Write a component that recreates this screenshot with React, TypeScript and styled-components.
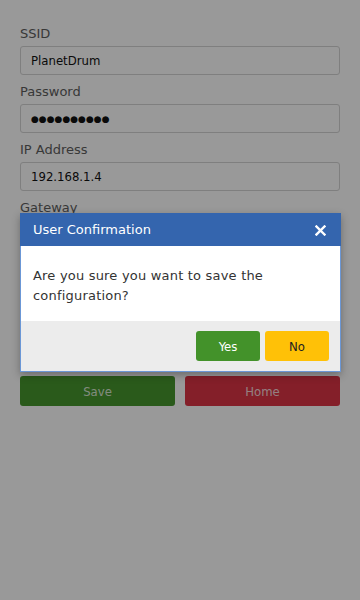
import React from "react";
import styled, { createGlobalStyle } from "styled-components";

const Global = createGlobalStyle`
  html, body { margin: 0; padding: 0; background: #fff; }
  body { font-family: "DejaVu Sans", Verdana, sans-serif; }
  * { box-sizing: border-box; }
`;

const Page = styled.div`
  position: relative;
  width: 360px;
  height: 600px;
  background: #fff;
  overflow: hidden;
`;

const Form = styled.form`
  display: flex;
  flex-direction: column;
  padding: 24px 20px 0 20px;
`;

const Field = styled.div`
  display: flex;
  flex-direction: column;
  gap: 2px;
  margin-bottom: 7px;
`;

const Label = styled.label`
  font-size: 13px;
  line-height: 20px;
  color: #5e5e5e;
`;

const Input = styled.input<{ $mask?: boolean }>`
  height: 29px;
  width: 100%;
  border: 1px solid #d4d4d4;
  border-radius: 3px;
  padding: 0 10px;
  font-family: ${(p) =>
    p.$mask ? `"DejaVu Sans", sans-serif` : `"DejaVu Sans Condensed", "DejaVu Sans", sans-serif`};
  font-size: ${(p) => (p.$mask ? "9px" : "13px")};
  color: #111;
  background: #fff;
  outline: none;
`;

const Actions = styled.div`
  display: grid;
  grid-template-columns: 1fr 1fr;
  gap: 10px;
  margin-top: 4px;
`;

const ActionButton = styled.button<{ $tone: "save" | "home" }>`
  height: 30px;
  border: none;
  border-radius: 3px;
  background: ${(p) => (p.$tone === "save" ? "#46962e" : "#dc3545")};
  color: rgba(255, 255, 255, 0.8);
  font-family: "DejaVu Sans Condensed", "DejaVu Sans", sans-serif;
  font-size: 13px;
`;

const Backdrop = styled.div`
  position: absolute;
  inset: 0;
  background: rgba(0, 0, 0, 0.4);
`;

const Dialog = styled.div`
  position: absolute;
  left: 20px;
  top: 213px;
  width: 321px;
  border: 1px solid #6b97d6;
  background: #fff;
  box-shadow: 0 3px 8px rgba(0, 0, 0, 0.3);
  display: flex;
  flex-direction: column;
`;

const Header = styled.div`
  height: 33px;
  background: #3465ae;
  display: flex;
  align-items: center;
  justify-content: space-between;
  padding: 1px 12px 0 12px;
  margin: -1px -1px 0 -1px;
`;

const Title = styled.div`
  color: #fff;
  font-size: 13px;
  line-height: 20px;
  padding-left: 1px;
`;

const Close = styled.button`
  width: 14px;
  height: 14px;
  padding: 0;
  border: none;
  background: none;
  display: flex;
  align-items: center;
  justify-content: center;
  margin-right: 2px;
`;

const Body = styled.div`
  padding: 20px 12px 15px 12px;
  font-size: 13px;
  line-height: 20px;
  color: #333;
  letter-spacing: 0.2px;
`;

const Footer = styled.div`
  background: #ececec;
  padding: 10px 11px;
  display: flex;
  justify-content: flex-end;
  gap: 5px;
`;

const DialogButton = styled.button<{ $tone: "yes" | "no" }>`
  width: 64px;
  height: 30px;
  border: none;
  border-radius: 3px;
  background: ${(p) => (p.$tone === "yes" ? "#43922a" : "#ffc107")};
  color: ${(p) => (p.$tone === "yes" ? "#fff" : "#222")};
  font-family: "DejaVu Sans Condensed", "DejaVu Sans", sans-serif;
  font-size: 13px;
`;

const fields: { label: string; value: string; mask?: boolean }[] = [
  { label: "SSID", value: "PlanetDrum" },
  { label: "Password", value: "●●●●●●●●●●", mask: true },
  { label: "IP Address", value: "192.168.1.4" },
  { label: "Gateway", value: "192.168.1.1" },
  { label: "Subnet Mask", value: "255.255.255.0" },
  { label: "DNS", value: "8.8.8.8" },
];

export default function App() {
  return (
    <Page>
      <Global />
      <Form onSubmit={(e) => e.preventDefault()}>
        {fields.map((f) => (
          <Field key={f.label}>
            <Label>{f.label}</Label>
            <Input type="text" $mask={f.mask} defaultValue={f.value} readOnly />
          </Field>
        ))}
        <Actions>
          <ActionButton type="button" $tone="save">Save</ActionButton>
          <ActionButton type="button" $tone="home">Home</ActionButton>
        </Actions>
      </Form>
      <Backdrop />
      <Dialog role="dialog">
        <Header>
          <Title>User Confirmation</Title>
          <Close type="button" aria-label="Close">
            <svg width="11" height="11" viewBox="0 0 11 11">
              <path d="M1.5 1.5 L9.5 9.5 M9.5 1.5 L1.5 9.5" stroke="#fff" strokeWidth="2.4" strokeLinecap="square" />
            </svg>
          </Close>
        </Header>
        <Body>Are you sure you want to save the configuration?</Body>
        <Footer>
          <DialogButton type="button" $tone="yes">Yes</DialogButton>
          <DialogButton type="button" $tone="no">No</DialogButton>
        </Footer>
      </Dialog>
    </Page>
  );
}
